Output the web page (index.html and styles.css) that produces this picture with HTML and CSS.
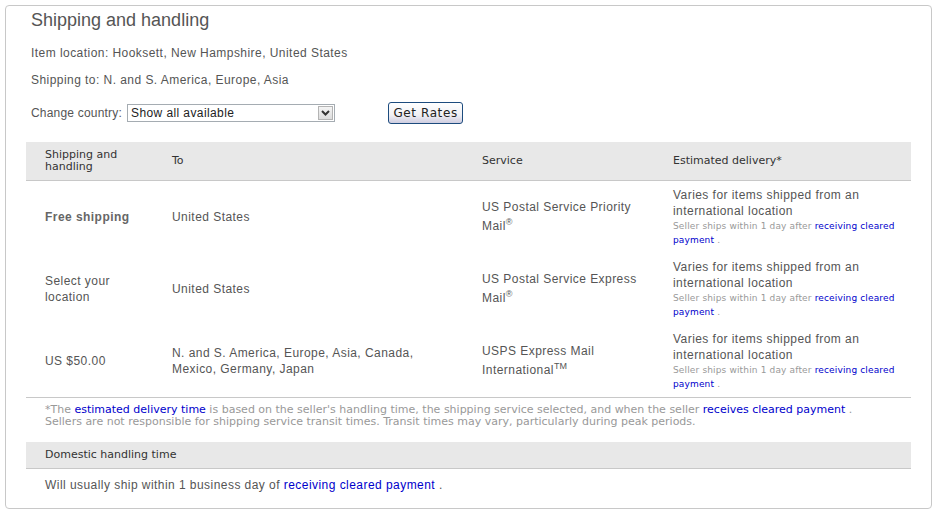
FILE: index.html
```html
<!DOCTYPE html>
<html>
<head>
<meta charset="utf-8">
<link rel="stylesheet" href="styles.css">
</head>
<body>
<div class="box">
  <h1 class="title">Shipping and handling</h1>
  <p class="line loc">Item location: Hooksett, New Hampshire, United States</p>
  <p class="line shipto">Shipping to: N. and S. America, Europe, Asia</p>
  <div class="country">
    <span class="clabel">Change country:</span>
    <div class="select">
      <span class="sval">Show all available</span>
      <span class="sarrow"><svg width="9" height="6" viewBox="0 0 9 6"><path d="M1 1 L4.5 4.5 L8 1" fill="none" stroke="#333" stroke-width="2"/></svg></span>
    </div>
    <button class="btn">Get Rates</button>
  </div>
  <table class="rates">
    <thead>
      <tr>
        <th class="c1">Shipping and<br>handling</th>
        <th class="c2">To</th>
        <th class="c3">Service</th>
        <th class="c4">Estimated delivery*</th>
      </tr>
    </thead>
    <tbody>
      <tr>
        <td class="c1"><b class="free">Free shipping</b></td>
        <td class="c2">United States</td>
        <td class="c3">US Postal Service Priority<br>Mail<sup>®</sup></td>
        <td class="c4">Varies for items shipped from an<br>international location<div class="seller">Seller ships within 1 day after <a href="#">receiving cleared<br>payment</a> .</div></td>
      </tr>
      <tr>
        <td class="c1">Select your<br>location</td>
        <td class="c2">United States</td>
        <td class="c3">US Postal Service Express<br>Mail<sup>®</sup></td>
        <td class="c4">Varies for items shipped from an<br>international location<div class="seller">Seller ships within 1 day after <a href="#">receiving cleared<br>payment</a> .</div></td>
      </tr>
      <tr>
        <td class="c1">US $50.00</td>
        <td class="c2">N. and S. America, Europe, Asia, Canada,<br>Mexico, Germany, Japan</td>
        <td class="c3">USPS Express Mail<br>International<sup>TM</sup></td>
        <td class="c4">Varies for items shipped from an<br>international location<div class="seller">Seller ships within 1 day after <a href="#">receiving cleared<br>payment</a> .</div></td>
      </tr>
    </tbody>
  </table>
  <div class="note">*The <a href="#">estimated delivery time</a> is based on the seller's handling time, the shipping service selected, and when the seller <a href="#">receives cleared payment</a> .<br>Sellers are not responsible for shipping service transit times. Transit times may vary, particularly during peak periods.</div>
  <div class="dhead">Domestic handling time</div>
  <p class="line dom">Will usually ship within 1 business day of <a href="#">receiving cleared payment</a> .</p>
</div>
</body>
</html>
```

FILE: styles.css
```css
html, body {
  margin: 0;
  padding: 0;
  background: #fff;
}
body {
  font-family: "Liberation Sans", Arial, sans-serif;
  color: #555;
}
a {
  color: #0000cc;
  text-decoration: none;
}
.box {
  margin: 5px 0 0 5px;
  box-sizing: border-box;
  width: 927px;
  height: 504px;
  border: 1px solid #c8c8c8;
  border-radius: 4px;
  padding: 0 19px 0 20px;
}
.title {
  margin: 3px 0 0 5px;
  font-size: 18px;
  line-height: 22px;
  font-weight: normal;
  color: #555;
}
.line {
  margin: 0 0 0 5px;
  font-size: 12px;
  line-height: 16px;
  letter-spacing: 0.45px;
}
.loc { margin-top: 14px; }
.shipto { margin-top: 11px; }
.country {
  margin: 14px 0 0 5px;
  height: 22px;
  display: flex;
  align-items: center;
  font-size: 12px;
}
.clabel {
  margin-right: 5px;
  letter-spacing: 0.2px;
}
.select {
  width: 208px;
  height: 18px;
  box-sizing: border-box;
  border: 1px solid #a5acb2;
  display: flex;
  align-items: center;
  justify-content: space-between;
  color: #222;
}
.sval { padding-left: 3px; font-size: 12px; letter-spacing: 0.4px; }
.sarrow {
  width: 15px;
  height: 14px;
  margin-right: 1px;
  box-sizing: border-box;
  border: 1px solid #b4b4b4;
  background: linear-gradient(#f4f4f4, #dcdcdc);
  display: flex;
  align-items: center;
  justify-content: center;
}
.btn {
  margin-left: 53px;
  height: 22px;
  width: 75px;
  padding: 0;
  font-family: "DejaVu Sans", Verdana, sans-serif;
  font-size: 12px;
  letter-spacing: 0.6px;
  color: #222;
  border: 1px solid #1d4c7e;
  border-radius: 3px;
  background: linear-gradient(#ffffff, #f0f0f4 60%, #cfcde0);
}
.rates {
  margin-top: 18px;
  width: 885px;
  border-collapse: collapse;
  table-layout: fixed;
}
.rates th {
  background: #e8e8e8;
  height: 38px;
  border-bottom: 1px solid #c8c8c8;
  font-family: "DejaVu Sans", Verdana, sans-serif;
  font-size: 11px;
  line-height: 12px;
  font-weight: normal;
  color: #333;
  text-align: left;
  padding: 0;
  vertical-align: middle;
}
.rates td {
  height: 72px;
  padding: 0;
  font-size: 12px;
  line-height: 16px;
  letter-spacing: 0.45px;
  color: #555;
  vertical-align: middle;
}
.rates .c1 { width: 127px; padding-left: 19px; }
.rates .c2 { width: 310px; }
.rates .c3 { width: 191px; }
.rates .c4 { width: 238px; }
.rates td.c3 { line-height: 19px; }
.free {
  font-weight: bold;
  color: #666;
}
sup {
  font-size: 9px;
  line-height: 0;
  vertical-align: 5px;
  letter-spacing: 0;
}
.seller {
  font-family: "DejaVu Sans", Verdana, sans-serif;
  font-size: 9px;
  line-height: 14px;
  letter-spacing: 0.15px;
  color: #999;
}
.note {
  border-top: 1px solid #c8c8c8;
  padding: 6px 0 0 19px;
  font-family: "DejaVu Sans", Verdana, sans-serif;
  font-size: 11px;
  line-height: 12px;
  color: #999;
  width: 866px;
}
.dhead {
  margin-top: 14px;
  width: 866px;
  height: 26px;
  padding-left: 19px;
  background: #e8e8e8;
  border-bottom: 1px solid #c8c8c8;
  font-family: "DejaVu Sans", Verdana, sans-serif;
  font-size: 11px;
  line-height: 26px;
  color: #333;
}
.dom {
  margin: 8px 0 0 19px;
}
```
